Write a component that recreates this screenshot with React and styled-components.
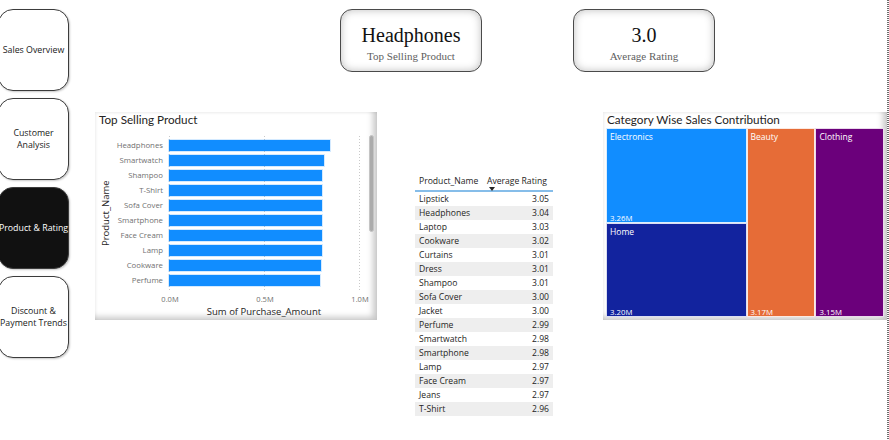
import React from "react";
import styled, { createGlobalStyle } from "styled-components";

const GlobalStyle = createGlobalStyle`
  html, body { margin: 0; padding: 0; background: #fff; }
  body { width: 889px; height: 440px; overflow: hidden; font-family: "Open Sans", sans-serif; }
  * { box-sizing: border-box; }
`;

const navItems = [
  { label: "Sales Overview" },
  { label: "Customer\nAnalysis" },
  { label: "Product & Rating", active: true },
  { label: "Discount &\nPayment Trends" },
];

const topProducts = [
  { name: "Headphones", value: 0.847 },
  { name: "Smartwatch", value: 0.817 },
  { name: "Shampoo", value: 0.807 },
  { name: "T-Shirt", value: 0.807 },
  { name: "Sofa Cover", value: 0.806 },
  { name: "Smartphone", value: 0.806 },
  { name: "Face Cream", value: 0.803 },
  { name: "Lamp", value: 0.803 },
  { name: "Cookware", value: 0.802 },
  { name: "Perfume", value: 0.795 },
];

const ratings = [
  ["Lipstick", "3.05"],
  ["Headphones", "3.04"],
  ["Laptop", "3.03"],
  ["Cookware", "3.02"],
  ["Curtains", "3.01"],
  ["Dress", "3.01"],
  ["Shampoo", "3.01"],
  ["Sofa Cover", "3.00"],
  ["Jacket", "3.00"],
  ["Perfume", "2.99"],
  ["Smartwatch", "2.98"],
  ["Smartphone", "2.98"],
  ["Lamp", "2.97"],
  ["Face Cream", "2.97"],
  ["Jeans", "2.97"],
  ["T-Shirt", "2.96"],
];

const PLOT_W = 190;

const Page = styled.div`
  display: flex;
  width: 889px;
  height: 440px;
  overflow: hidden;
  background: #fff;
`;

const Nav = styled.nav`
  flex: none;
  width: 71px;
  margin-left: -2px;
  padding-top: 9px;
  display: flex;
  flex-direction: column;
  gap: 7px;
`;

const NavButton = styled.div`
  height: 82px;
  border: 1px solid #3c3c3c;
  border-radius: 15px;
  display: flex;
  align-items: center;
  justify-content: center;
  text-align: center;
  white-space: pre;
  font-family: "Open Sans", sans-serif;
  font-size: 8.8px;
  line-height: 12px;
  color: ${(p) => (p.$active ? "#ffffff" : "#1a1a1a")};
  background: ${(p) => (p.$active ? "#111111" : "#ffffff")};
  box-shadow: 1px 1px 2px rgba(0, 0, 0, 0.22);
`;

const Main = styled.main`
  flex: 1;
  min-width: 0;
  display: flex;
  flex-direction: column;
`;

const KpiRow = styled.div`
  display: flex;
  gap: 91px;
  padding: 9px 0 0 271px;
`;

const KpiCard = styled.div`
  width: 142px;
  height: 63px;
  border: 1px solid #4a4a4a;
  border-radius: 12px;
  box-shadow: inset 0 0 9px rgba(0, 0, 0, 0.26);
  display: flex;
  flex-direction: column;
  align-items: center;
  padding-top: 13px;
  font-family: "Liberation Serif", "Times New Roman", serif;
`;

const KpiValue = styled.div`
  font-size: 20px;
  line-height: 24px;
  color: #111;
`;

const KpiLabel = styled.div`
  font-size: 11px;
  line-height: 14px;
  color: #5e5e5e;
  margin-top: 2px;
`;

const VisualRow = styled.div`
  display: flex;
  align-items: flex-start;
  margin-top: 40px;
  padding-left: 26px;
`;

const VisualCard = styled.section`
  position: relative;
  flex: none;
  width: ${(p) => p.$w}px;
  height: 208px;
  margin-left: ${(p) => p.$ml || 0}px;
  background: #fff;
  box-shadow: inset -5px -4px 6px -1px rgba(0, 0, 0, 0.22),
    inset 1px 1px 3px rgba(0, 0, 0, 0.07);
`;

const VisualTitle = styled.h2`
  margin: 0;
  padding: 0 4px;
  font-family: Lato, "Open Sans", sans-serif;
  font-weight: 400;
  font-size: 11.7px;
  line-height: 14px;
  color: #252423;
`;

const ChartBody = styled.div`
  display: flex;
  margin-top: 10px;
`;

const YAxisTitle = styled.div`
  width: 20px;
  height: 154px;
  display: flex;
  align-items: center;
  justify-content: center;
  writing-mode: vertical-rl;
  transform: rotate(180deg);
  font-size: 9.5px;
  color: #252423;
`;

const ChartColumn = styled.div`
  display: flex;
  flex-direction: column;
`;

const Plot = styled.div`
  display: flex;
`;

const LabelCol = styled.div`
  width: 54px;
  padding: 2px 6px 2px 0;
`;

const CatLabel = styled.div`
  height: 15px;
  line-height: 15px;
  text-align: right;
  white-space: nowrap;
  font-size: 7.8px;
  color: #707070;
`;

const BarCol = styled.div`
  position: relative;
  width: ${PLOT_W + 1}px;
  padding: 2px 0;
`;

const Grid = styled.svg`
  position: absolute;
  inset: 0;
`;

const BarRow = styled.div`
  position: relative;
  height: 15px;
  display: flex;
  align-items: center;
`;

const Bar = styled.div`
  height: 11px;
  background: #118dff;
  box-shadow: 0 0 0 1px rgba(17, 141, 255, 0.18);
`;

const TickRow = styled.div`
  display: flex;
  gap: 55px;
  padding-left: 35px;
  margin-top: 4px;
`;

const Tick = styled.div`
  width: 40px;
  text-align: center;
  font-size: 7.5px;
  line-height: 10px;
  color: #707070;
`;

const XAxisTitle = styled.div`
  margin-left: 54px;
  width: ${PLOT_W}px;
  text-align: center;
  font-size: 9.5px;
  line-height: 13px;
  margin-top: 1px;
  color: #252423;
  white-space: nowrap;
`;

const ScrollThumb = styled.div`
  position: absolute;
  left: 274px;
  top: 23px;
  width: 5px;
  height: 97px;
  border-radius: 3px;
  background: #ababab;
  border: 1px solid #c4c4c4;
`;

const Table = styled.div`
  flex: none;
  width: 138px;
  margin: 60px 0 0 38px;
  font-family: "Open Sans", sans-serif;
  color: #252423;
`;

const HeaderRow = styled.div`
  display: grid;
  grid-template-columns: 70px 1fr;
  height: 20px;
  border-bottom: 2px solid #86bde9;
`;

const HeaderCell = styled.div`
  display: flex;
  flex-direction: column;
  padding: 3px 0 0 ${(p) => p.$pl}px;
  font-size: 8.6px;
  line-height: 12px;
  white-space: nowrap;
`;

const SortArrow = styled.span`
  width: 0;
  height: 0;
  margin-left: 2px;
  border-left: 3px solid transparent;
  border-right: 3px solid transparent;
  border-top: 4px solid #252423;
`;

const DataRow = styled.div`
  display: grid;
  grid-template-columns: 70px 1fr;
  height: 14px;
  align-items: center;
  padding: 0 4px;
  font-size: 8.6px;
  line-height: 14px;
  background: ${(p) => (p.$alt ? "#eeeeee" : "transparent")};
`;

const NumCell = styled.span`
  text-align: right;
`;

const Treemap = styled.div`
  display: flex;
  width: 278px;
  height: 189px;
  margin: 2px 0 0 3px;
`;

const TileColumn = styled.div`
  display: flex;
  flex-direction: column;
  flex: ${(p) => p.$grow} 1 0px;
  min-width: 0;
`;

const Tile = styled.div`
  flex: ${(p) => p.$grow} 1 0px;
  min-width: 0;
  min-height: 0;
  display: flex;
  flex-direction: column;
  justify-content: space-between;
  background: ${(p) => p.$color};
  box-shadow: inset 0 0 0 1px rgba(255, 255, 255, 0.85);
  color: #fff;
  font-family: "Open Sans", sans-serif;
  overflow: hidden;
`;

const TileName = styled.span`
  margin: 3px 0 0 4px;
  font-size: 8.5px;
  line-height: 12px;
  white-space: nowrap;
`;

const TileValue = styled.span`
  margin-left: 4px;
  font-size: 7.8px;
  line-height: 10px;
`;

const PageEdge = styled.div`
  position: relative;
  z-index: 1;
  flex: none;
  width: 2px;
  height: 440px;
  background: repeating-linear-gradient(to bottom, #6c6c6c 0 1px, #ffffff 1px 2px);
`;

function BarChart() {
  return (
    <VisualCard $w={282}>
      <VisualTitle>Top Selling Product</VisualTitle>
      <ChartBody>
        <YAxisTitle>Product_Name</YAxisTitle>
        <ChartColumn>
          <Plot>
            <LabelCol>
              {topProducts.map((p) => (
                <CatLabel key={p.name}>{p.name}</CatLabel>
              ))}
            </LabelCol>
            <BarCol>
              <Grid width={PLOT_W + 1} height={154}>
                {[0.5, 95.5, 190.5].map((x) => (
                  <line key={x} x1={x} x2={x} y1={0} y2={154} stroke="#c9c9c9" strokeWidth="1" strokeDasharray="1 2" />
                ))}
              </Grid>
              {topProducts.map((p) => (
                <BarRow key={p.name}>
                  <Bar style={{ width: `${p.value * PLOT_W}px` }} />
                </BarRow>
              ))}
            </BarCol>
          </Plot>
          <TickRow>
            <Tick>0.0M</Tick>
            <Tick>0.5M</Tick>
            <Tick>1.0M</Tick>
          </TickRow>
          <XAxisTitle>Sum of Purchase_Amount</XAxisTitle>
        </ChartColumn>
      </ChartBody>
      <ScrollThumb />
    </VisualCard>
  );
}

function RatingTable() {
  return (
    <Table>
      <HeaderRow>
        <HeaderCell $pl={4}>Product_Name</HeaderCell>
        <HeaderCell $pl={2}>
          Average Rating
          <SortArrow />
        </HeaderCell>
      </HeaderRow>
      {ratings.map(([name, val], i) => (
        <DataRow key={name} $alt={i % 2 === 1}>
          <span>{name}</span>
          <NumCell>{val}</NumCell>
        </DataRow>
      ))}
    </Table>
  );
}

function CategoryTreemap() {
  return (
    <VisualCard $w={284} $ml={50}>
      <VisualTitle>Category Wise Sales Contribution</VisualTitle>
      <Treemap>
        <TileColumn $grow={6.46}>
          <Tile $grow={3.26} $color="#118DFF">
            <TileName>Electronics</TileName>
            <TileValue>3.26M</TileValue>
          </Tile>
          <Tile $grow={3.2} $color="#12239E">
            <TileName>Home</TileName>
            <TileValue>3.20M</TileValue>
          </Tile>
        </TileColumn>
        <Tile $grow={3.17} $color="#E66C37">
          <TileName>Beauty</TileName>
          <TileValue>3.17M</TileValue>
        </Tile>
        <Tile $grow={3.15} $color="#6B007B">
          <TileName>Clothing</TileName>
          <TileValue>3.15M</TileValue>
        </Tile>
      </Treemap>
    </VisualCard>
  );
}

export default function App() {
  return (
    <>
      <GlobalStyle />
      <Page>
        <Nav>
          {navItems.map((n) => (
            <NavButton key={n.label} $active={n.active}>
              {n.label}
            </NavButton>
          ))}
        </Nav>
        <Main>
          <KpiRow>
            <KpiCard>
              <KpiValue>Headphones</KpiValue>
              <KpiLabel>Top Selling Product</KpiLabel>
            </KpiCard>
            <KpiCard>
              <KpiValue>3.0</KpiValue>
              <KpiLabel>Average Rating</KpiLabel>
            </KpiCard>
          </KpiRow>
          <VisualRow>
            <BarChart />
            <RatingTable />
            <CategoryTreemap />
          </VisualRow>
        </Main>
        <PageEdge />
      </Page>
    </>
  );
}
